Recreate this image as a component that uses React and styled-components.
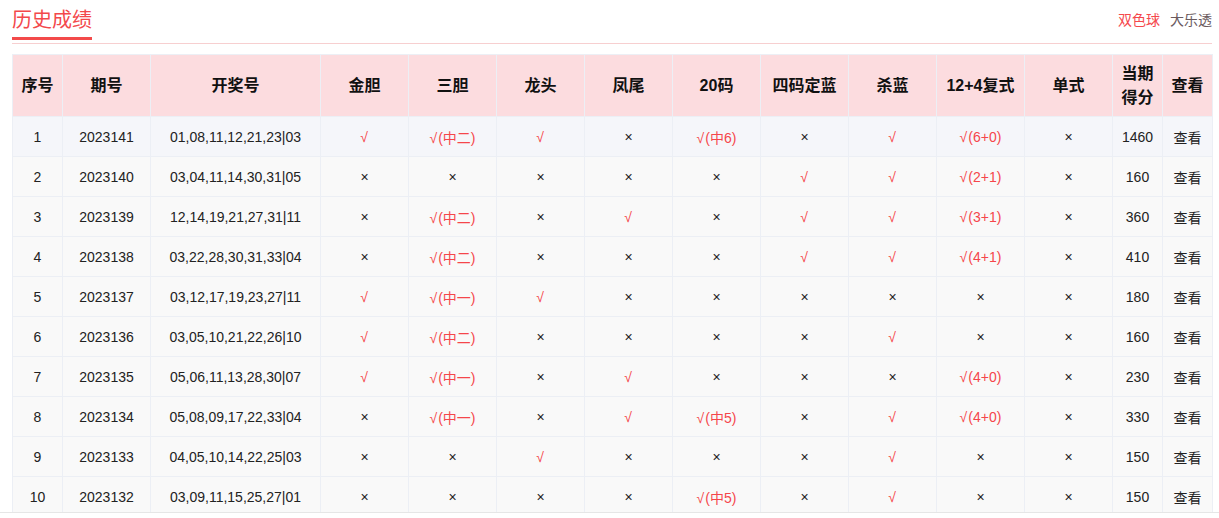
import styled, { createGlobalStyle } from "styled-components";

const GlobalStyle = createGlobalStyle`
  body {
    margin: 0;
    background: #fff;
    font-family: "Liberation Sans", "Noto Sans CJK SC", sans-serif;
    color: #222;
  }
`;

const columns = [
  { title: "序号", width: 50 },
  { title: "期号", width: 88 },
  { title: "开奖号", width: 170 },
  { title: "金胆", width: 88 },
  { title: "三胆", width: 88 },
  { title: "龙头", width: 88 },
  { title: "凤尾", width: 88 },
  { title: "20码", width: 88 },
  { title: "四码定蓝", width: 88 },
  { title: "杀蓝", width: 88 },
  { title: "12+4复式", width: 88 },
  { title: "单式", width: 88 },
  { title: "当期得分", width: 50 },
  { title: "查看", width: 50 },
];

const rows = [
  ["1", "2023141", "01,08,11,12,21,23|03", "√", "√(中二)", "√", "×", "√(中6)", "×", "√", "√(6+0)", "×", "1460"],
  ["2", "2023140", "03,04,11,14,30,31|05", "×", "×", "×", "×", "×", "√", "√", "√(2+1)", "×", "160"],
  ["3", "2023139", "12,14,19,21,27,31|11", "×", "√(中二)", "×", "√", "×", "√", "√", "√(3+1)", "×", "360"],
  ["4", "2023138", "03,22,28,30,31,33|04", "×", "√(中二)", "×", "×", "×", "√", "√", "√(4+1)", "×", "410"],
  ["5", "2023137", "03,12,17,19,23,27|11", "√", "√(中一)", "√", "×", "×", "×", "×", "×", "×", "180"],
  ["6", "2023136", "03,05,10,21,22,26|10", "√", "√(中二)", "×", "×", "×", "×", "√", "×", "×", "160"],
  ["7", "2023135", "05,06,11,13,28,30|07", "√", "√(中一)", "×", "√", "×", "×", "×", "√(4+0)", "×", "230"],
  ["8", "2023134", "05,08,09,17,22,33|04", "×", "√(中一)", "×", "√", "√(中5)", "×", "√", "√(4+0)", "×", "330"],
  ["9", "2023133", "04,05,10,14,22,25|03", "×", "×", "√", "×", "×", "×", "√", "×", "×", "150"],
  ["10", "2023132", "03,09,11,15,25,27|01", "×", "×", "×", "×", "√(中5)", "×", "√", "×", "×", "150"],
];

const renderCell = (v) =>
  v.startsWith("√") ? (
    <>
      <Check>√</Check>
      {v.slice(1)}
    </>
  ) : (
    v
  );

const App = () => {
  return (
    <>
      <GlobalStyle />
      <Page>
        <Inner>
          <TopBar>
            <Tab>历史成绩</Tab>
            <Links>
              <LinkItem active>双色球</LinkItem>
              <LinkItem>大乐透</LinkItem>
            </Links>
          </TopBar>
          <Table>
            <colgroup>
              {columns.map((c) => (
                <col key={c.title} style={{ width: c.width }} />
              ))}
            </colgroup>
            <thead>
              <tr>
                {columns.map((c) => (
                  <Th key={c.title}>
                    {c.title === "当期得分" ? (
                      <>
                        当期
                        <br />
                        得分
                      </>
                    ) : (
                      c.title
                    )}
                  </Th>
                ))}
              </tr>
            </thead>
            <tbody>
              {rows.map((r, i) => (
                <Row key={r[0]} active={i === 0}>
                  {r.map((v, j) => (
                    <Td key={j} hit={j > 2 && j < 12 && v.startsWith("√")}>
                      {j > 2 && j < 12 ? renderCell(v) : v}
                    </Td>
                  ))}
                  <Td>查看</Td>
                </Row>
              ))}
            </tbody>
          </Table>
        </Inner>
      </Page>
    </>
  );
};

export default App;

const Page = styled.div`
  width: 100%;
  height: 512px;
  overflow: hidden;
  border-bottom: 1px solid #e6e6e6;
`;

const Inner = styled.div`
  width: 1200px;
  padding-left: 12px;
`;

const TopBar = styled.div`
  height: 43px;
  display: flex;
  align-items: flex-start;
  justify-content: space-between;
  border-bottom: 1px solid #f7cfd0;
  margin-bottom: 10px;
`;

const Tab = styled.div`
  height: 40px;
  box-sizing: border-box;
  padding-top: 7px;
  line-height: 26px;
  font-size: 20px;
  color: #f3484b;
  border-bottom: 3px solid #f34a4a;
`;

const Links = styled.div`
  display: flex;
  gap: 10px;
  padding-top: 10px;
  font-size: 14px;
  line-height: 20px;
`;

const LinkItem = styled.span`
  color: ${(p) => (p.active ? "#f5484c" : "#6a5a5e")};
  cursor: pointer;
`;

const Table = styled.table`
  width: 1200px;
  table-layout: fixed;
  border-collapse: collapse;
  font-size: 14px;
`;

const Th = styled.th`
  height: 61px;
  padding: 0;
  background: #fcdcdf;
  border: 1px solid #eceff5;
  font-size: 16px;
  font-weight: bold;
  line-height: 24px;
  color: #111;
  text-align: center;
`;

const Row = styled.tr`
  background: ${(p) => (p.active ? "#f5f6fa" : "#f9f9f9")};
`;

const Td = styled.td`
  height: 39px;
  padding: 0;
  border: 1px solid #eceff5;
  text-align: center;
  white-space: nowrap;
  color: ${(p) => (p.hit ? "#f5464b" : "#222")};
`;

const Check = styled.span`
  font-family: "Liberation Sans", sans-serif;
  margin-right: 1px;
`;
